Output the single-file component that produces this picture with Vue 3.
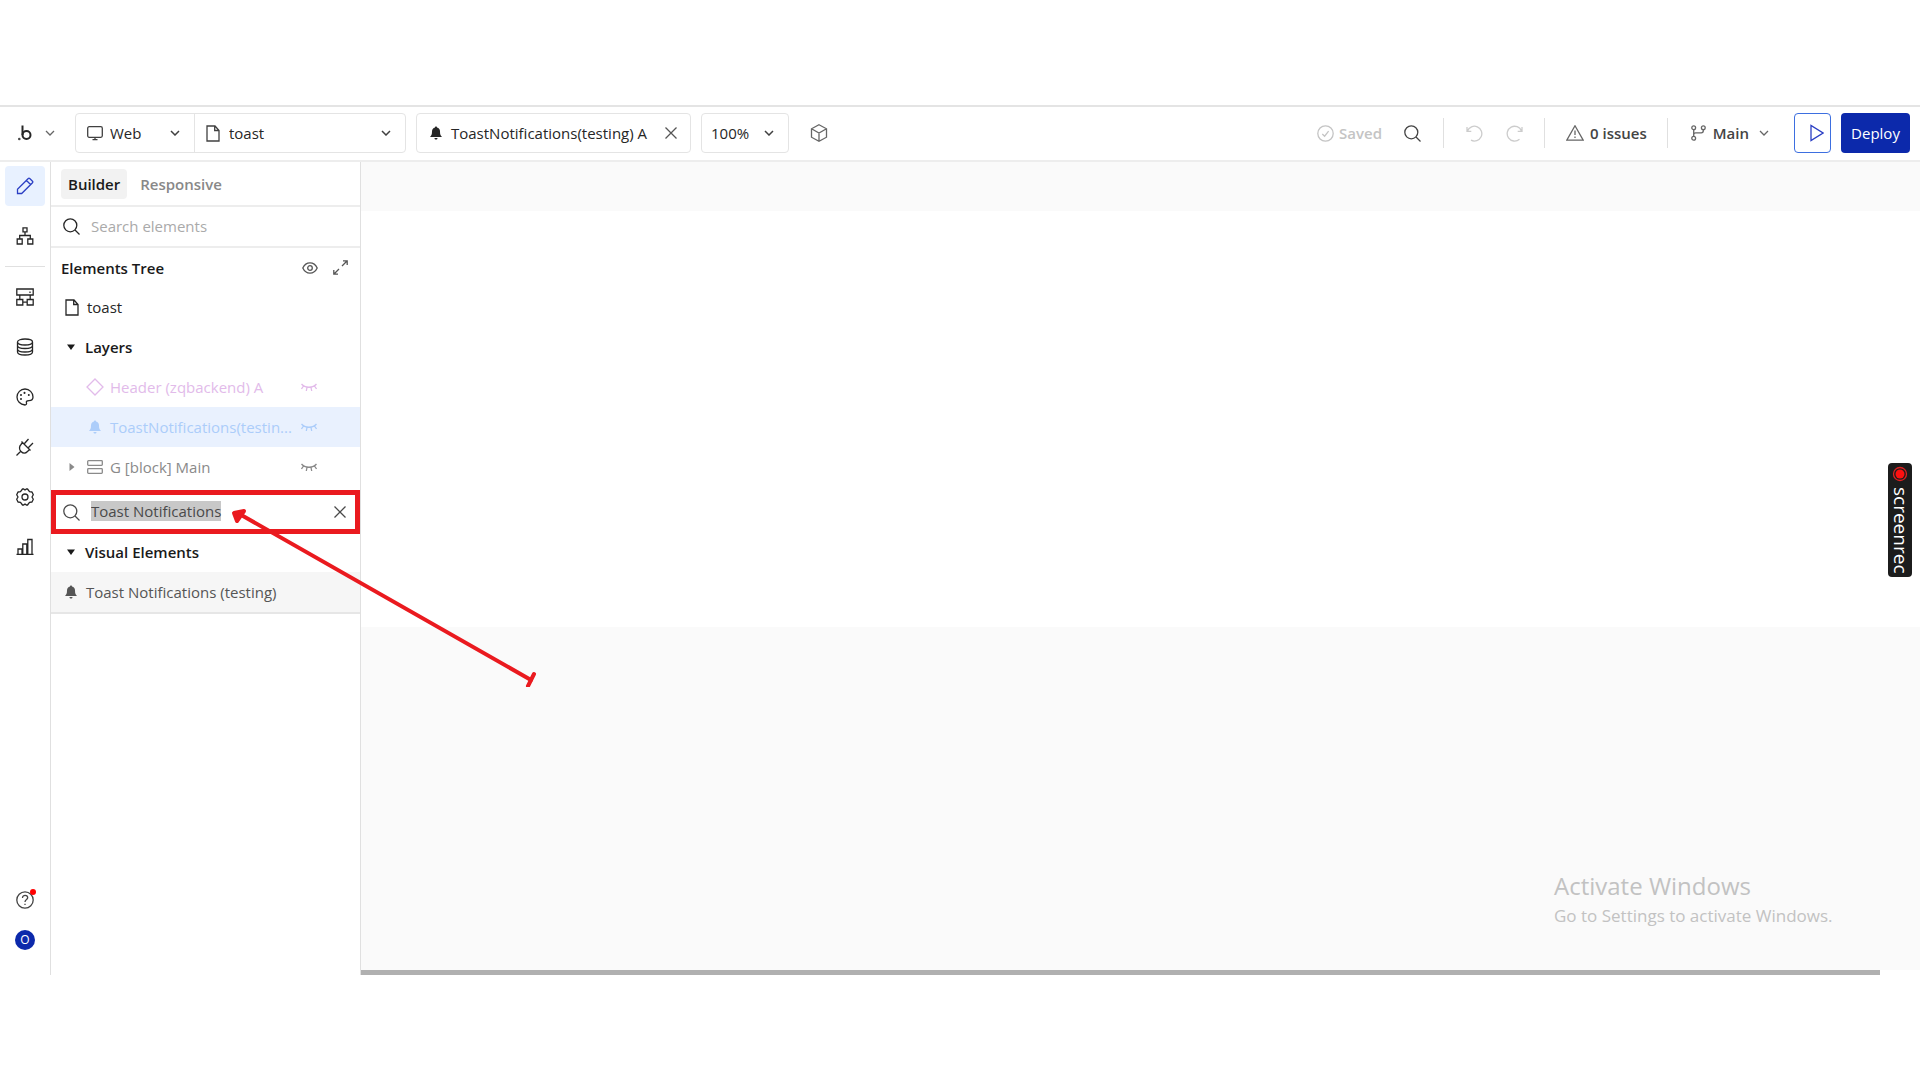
<script setup>
import { ref, onMounted } from 'vue'

const platform = ref('Web')
const page = ref('toast')
const zoom = ref('100%')
const elementQuery = ref('')
const paletteQuery = ref('Toast Notifications')
const paletteInput = ref(null)

const tools = [
  { id: 'design', label: 'Design', active: true },
  { id: 'workflow', label: 'Workflow', dividerAfter: true },
  { id: 'backend', label: 'Backend' },
  { id: 'data', label: 'Data' },
  { id: 'styles', label: 'Styles' },
  { id: 'plugins', label: 'Plugins' },
  { id: 'settings', label: 'Settings' },
  { id: 'logs', label: 'Logs' },
]

const layers = [
  { name: 'Header (zqbackend) A', kind: 'reusable' },
  { name: 'ToastNotifications(testin...', kind: 'plugin' },
  { name: 'G [block] Main', kind: 'container' },
]

onMounted(() => {
  paletteInput.value.focus({ preventScroll: true })
  paletteInput.value.select()
})
</script>

<template>
  <div class="app">
    <header class="toolbar">
      <button class="logo" aria-label="Main menu">
        <svg width="14" height="16" viewBox="0 0 14 16" fill="none" stroke="#4a4a4a">
          <g stroke-width="2"><path d="M4.500 0.500V10" /><circle cx="8.500" cy="10" r="4" /></g>
          <circle cx="1.300" cy="14" r="1.300" fill="#4a4a4a" stroke="none" />
        </svg>
        <svg class="chev soft" viewBox="0 0 10 6"><path d="M1 1l4 4 4-4" /></svg>
      </button>

      <div class="group">
        <label class="field platform">
          <svg class="lead" width="16" height="16" viewBox="0 0 16 16"><rect x="0.700" y="1.700" width="14.600" height="10.600" rx="1.500" /><path d="M5.500 14.700h5M8 12.500v2" /></svg>
          <select v-model="platform" aria-label="Platform"><option>Web</option></select>
          <svg class="chev" viewBox="0 0 10 6"><path d="M1 1l4 4 4-4" /></svg>
        </label>
        <label class="field page">
          <svg class="lead" width="14" height="17" viewBox="0 0 14 17"><path d="M1 1h8l4 4.500V16H1zM8.700 1.200V5.500H13" /></svg>
          <select v-model="page" aria-label="Page"><option>toast</option></select>
          <svg class="chev" viewBox="0 0 10 6"><path d="M1 1l4 4 4-4" /></svg>
        </label>
      </div>

      <div class="box tab">
        <svg class="bell" width="12" height="14" viewBox="0 0 12 14"><path d="M6 0.500c.7 0 1 .4 1 1C9 2 10 3.500 10 5.500c0 3 .6 4 1.700 5V11H.3v-.5C1.400 9.500 2 8.500 2 5.500 2 3.500 3 2 5 1.500c0-.6.3-1 1-1zM4.500 12h3c0 1-.6 1.600-1.500 1.600S4.500 13 4.500 12z" /></svg>
        <span>ToastNotifications(testing) A</span>
        <button aria-label="Close tab"><svg width="12" height="12" viewBox="0 0 12 12"><path d="M.5.500l11 11M11.500.500l-11 11" /></svg></button>
      </div>

      <label class="field box zoom">
        <select v-model="zoom" aria-label="Zoom"><option>100%</option></select>
        <svg class="chev" viewBox="0 0 10 6"><path d="M1 1l4 4 4-4" /></svg>
      </label>

      <button class="cube" aria-label="Components">
        <svg width="18" height="18" viewBox="0 0 18 18"><path d="M9 .8l7.500 4v8.400L9 17.200l-7.500-4V4.800zM1.500 4.800L9 9l7.500-4.200M9 9v8.200" /></svg>
      </button>

      <div class="status">
        <span class="saved">
          <svg width="17" height="17" viewBox="0 0 17 17"><circle cx="8.500" cy="8.500" r="7.700" /><path d="M5.300 9l2.300 2.200 4-5" /></svg>
          Saved
        </span>
        <button class="find" aria-label="Search"><svg width="17" height="17" viewBox="0 0 17 17"><circle cx="7.300" cy="7.300" r="6.500" /><path d="M12 12l4.500 4.500" /></svg></button>
        <i class="sep"></i>
        <button class="faded undo" aria-label="Undo"><svg width="17" height="17" viewBox="0 0 17 17"><path d="M1 2v4.300h4.300M1.500 6A7.400 7.400 0 1 1 5 15.200" /></svg></button>
        <button class="faded redo" aria-label="Redo"><svg width="17" height="17" viewBox="0 0 17 17"><path d="M16 2v4.300h-4.300M15.500 6A7.400 7.400 0 1 0 13.500 14.200" /></svg></button>
        <i class="sep"></i>
        <button class="issues">
          <svg width="18" height="16" viewBox="0 0 18 16"><path d="M9 .8l8.200 14.400H.8zM9 5.500v4.500M9 11.500v1.500" /></svg>
          0 issues
        </button>
        <i class="sep"></i>
        <button class="branch">
          <svg width="15" height="16" viewBox="0 0 15 16"><circle cx="2.700" cy="2.700" r="1.900" /><circle cx="12.300" cy="2.700" r="1.900" /><circle cx="2.700" cy="13.300" r="1.900" /><path d="M2.700 4.600v6.800M12.300 4.600v1.200q0 2-2 2H4.700q-2 0-2 2" /></svg>
          Main
          <svg class="chev soft" viewBox="0 0 10 6"><path d="M1 1l4 4 4-4" /></svg>
        </button>
        <button class="play" aria-label="Preview"><svg width="14" height="18" viewBox="0 0 14 18"><path d="M1 1.500v15L13 9z" /></svg></button>
        <button class="deploy">Deploy</button>
      </div>
    </header>

    <div class="workspace">
      <nav class="rail">
        <template v-for="t in tools" :key="t.id">
          <button class="tool" :class="{ active: t.active }" :aria-label="t.label">
            <svg width="18" height="18" viewBox="0 0 18 18">
              <path v-if="t.id === 'design'" d="M1.500 16.500v-4.200L12.300 1.500q.7-.7 1.400 0l2.800 2.800q.7.7 0 1.400L5.700 16.500zM10.500 3.500l4 4" />
              <path v-else-if="t.id === 'workflow'" d="M7 .8h4v4H7zM9 4.800V8.500M3.700 12V8.500h10.600V12M1.200 12h5v5h-5zM11.800 12h5v5h-5z" />
              <path v-else-if="t.id === 'backend'" d="M.8 1h16.400v6H.8zM14 3.500v1.500M.8 11.500h6v5.500h-6zM11.200 11.500h6v5.500h-6zM3.800 7v4.500M14.200 7v4.500M6.800 14.200h4.400" />
              <path v-else-if="t.id === 'data'" d="M1.500 4C1.500 0 16.500 0 16.500 4S1.500 8 1.500 4v10c0 4 15 4 15 0V4M1.500 7.500c0 4 15 4 15 0M1.500 11c0 4 15 4 15 0" />
              <g v-else-if="t.id === 'styles'"><path d="M9 17C4 16.500 1 13 1 9a8 8 0 0 1 16 0c0 3-1.500 3.600-4 3.600-2.500 0-3 .8-2.500 2.400.3 1.200-.4 2-1.500 2z" /><path class="dots" d="M5 11v.1M5 7v.1M8.500 4.800v.1M12.800 7v.1" /></g>
              <path v-else-if="t.id === 'plugins'" d="M.5 17.500l4.500-4.500M6.500 4.500l7 7-2 2c-2 2-4.500 2-6.500 0s-2-5 0-7zM5.500 3.500l9 9M8.500 5.500L12.500 1M12.500 9.500L17 5" />
              <g v-else-if="t.id === 'settings'"><path d="M6.500 1h1.200L9 2l1.300-1h1.200l2 2.700 2.500.3 1.300 2.700L16 9l1.300 2.300L16 14l-2.500.3-2 2.700h-1.200L9 16l-1.300 1H6.500l-2-2.700L2 14 .7 11.300 2 9 .7 6.700 2 4l2.500-.3z" stroke-linejoin="round" /><circle cx="9" cy="9" r="3" /></g>
              <path v-else d="M2 16.300h4V11H2zM6.800 16.300h4V6h-4zM11.800 16.300h4.200V1.500h-4.200zM.5 16.300h17" />
            </svg>
          </button>
          <hr v-if="t.dividerAfter" />
        </template>
        <div class="account">
          <button class="help" aria-label="Help">
            <svg width="18" height="18" viewBox="0 0 18 18"><circle cx="9" cy="9" r="8.200" /><path d="M6.500 7c0-3.500 5.200-3.200 5.200-.2C11.700 8.700 9 8.500 9 11M9 12.700V14" /></svg>
            <i class="badge"></i>
          </button>
          <button class="avatar" aria-label="Account">O</button>
        </div>
      </nav>

      <aside class="panel">
        <div class="tabs">
          <button class="on">Builder</button>
          <button>Responsive</button>
        </div>
        <label class="search first">
          <svg width="17" height="17" viewBox="0 0 17 17"><circle cx="7.300" cy="7.300" r="6.500" /><path d="M12 12l4.500 4.500" /></svg>
          <input v-model="elementQuery" placeholder="Search elements" aria-label="Search elements" />
        </label>

        <div class="row heading">
          <strong>Elements Tree</strong>
          <button aria-label="Toggle visibility"><svg width="16" height="12" viewBox="0 0 16 12"><path d="M.8 6C4-.8 12-.8 15.200 6 12 12.800 4 12.800.8 6z" /><circle cx="8" cy="6" r="2.300" /></svg></button>
          <button aria-label="Expand"><svg width="15" height="15" viewBox="0 0 15 15"><path d="M9 6l5-5M10 .8h4.200V5M6 9l-5 5M.8 10v4.200H5" /></svg></button>
        </div>
        <div class="row root">
          <svg width="14" height="17" viewBox="0 0 14 17"><path d="M1 1h8l4 4.500V16H1zM8.700 1.200V5.500H13" /></svg>
          toast
        </div>
        <div class="row section">
          <svg class="arrow" width="8" height="6" viewBox="0 0 8 6"><path d="M0 .5h8L4 6z" /></svg>
          <strong>Layers</strong>
        </div>
        <div v-for="l in layers" :key="l.name" class="row layer" :class="l.kind">
          <span class="caret"><svg v-if="l.kind === 'container'" class="arrow" width="6" height="8" viewBox="0 0 6 8"><path d="M.5 0v8L5.500 4z" /></svg></span>
          <span class="glyph">
            <svg v-if="l.kind === 'reusable'" width="18" height="18" viewBox="0 0 18 18"><path d="M9 1l8 8-8 8-8-8z" /></svg>
            <svg v-else-if="l.kind === 'plugin'" class="bell" width="12" height="14" viewBox="0 0 12 14"><path d="M6 0.500c.7 0 1 .4 1 1C9 2 10 3.500 10 5.500c0 3 .6 4 1.700 5V11H.3v-.5C1.400 9.500 2 8.500 2 5.500 2 3.500 3 2 5 1.500c0-.6.3-1 1-1zM4.500 12h3c0 1-.6 1.600-1.500 1.600S4.500 13 4.500 12z" /></svg>
            <svg v-else width="16" height="14" viewBox="0 0 16 14"><rect x=".7" y=".7" width="14.600" height="4.600" rx=".8" /><rect x=".7" y="8.700" width="14.600" height="4.600" rx=".8" /></svg>
          </span>
          <span class="name">{{ l.name }}</span>
          <button aria-label="Show element"><svg width="16" height="9" viewBox="0 0 16 9"><path d="M.5 1C4 5.300 12 5.300 15.500 1M2.500 3L.5 6M6 4.300L5.300 8M10 4.300L10.700 8M13.500 3l2 3" /></svg></button>
        </div>

        <label class="search second">
          <svg width="17" height="17" viewBox="0 0 17 17"><circle cx="7.300" cy="7.300" r="6.500" /><path d="M12 12l4.500 4.500" /></svg>
          <input ref="paletteInput" v-model="paletteQuery" aria-label="Search visual elements" />
          <button aria-label="Clear search"><svg width="12" height="12" viewBox="0 0 12 12"><path d="M.5.500l11 11M11.500.500l-11 11" /></svg></button>
          <i class="highlight"></i>
          <svg class="pointer" width="310" height="182" viewBox="0 0 310 182">
            <g stroke-width="4">
              <path d="M15 11L303 175" />
              <path d="M306 169l-6 12" />
              <path d="M6 8l10-2-7 10z" fill="#ea1a1f" />
            </g>
          </svg>
        </label>
        <div class="row section">
          <svg class="arrow" width="8" height="6" viewBox="0 0 8 6"><path d="M0 .5h8L4 6z" /></svg>
          <strong>Visual Elements</strong>
        </div>
        <button class="row result">
          <svg class="bell" width="12" height="14" viewBox="0 0 12 14"><path d="M6 0.500c.7 0 1 .4 1 1C9 2 10 3.500 10 5.500c0 3 .6 4 1.700 5V11H.3v-.5C1.400 9.500 2 8.500 2 5.500 2 3.500 3 2 5 1.500c0-.6.3-1 1-1zM4.500 12h3c0 1-.6 1.600-1.500 1.600S4.500 13 4.500 12z" /></svg>
          Toast Notifications (testing)
        </button>
      </aside>

      <main class="canvas">
        <div class="surface">
          <div class="sheet"></div>
        </div>
        <div class="track"><div class="thumb"></div></div>
        <div class="watermark">
          <p class="title">Activate Windows</p>
          <p>Go to Settings to activate Windows.</p>
        </div>
        <button class="recorder">
          <svg width="16" height="16" viewBox="0 0 16 16"><circle cx="8" cy="8" r="6.500" stroke="#e02020" fill="none" /><circle cx="8" cy="8" r="4.500" fill="#ff1010" stroke="none" /></svg>
          <span>screen</span><span>rec</span>
        </button>
      </main>
    </div>
  </div>
</template>

<style>
body {
  margin: 0;
  background: #fff;
}
</style>

<style scoped>
* {
  box-sizing: border-box;
}
.app {
  display: flex;
  flex-direction: column;
  min-height: 100vh;
  padding: 105px 0;
  font: 15px/20px "Open Sans", sans-serif;
  color: #262626;
}
button,
input,
select {
  font: inherit;
  color: inherit;
  background: none;
  border: 0;
  padding: 0;
  margin: 0;
  outline: 0;
}
button {
  display: flex;
  align-items: center;
  cursor: pointer;
  white-space: nowrap;
}
svg {
  display: block;
  flex: none;
  fill: none;
  stroke: currentColor;
  stroke-width: 1.300;
}
strong {
  font-weight: 600;
  color: #1a1a1a;
}
.bell,
.arrow {
  fill: currentColor;
  stroke: none;
}
.chev {
  width: 10px;
  height: 6px;
  color: #404040;
  stroke-width: 1.500;
}
.chev.soft {
  color: #666;
  stroke-width: 1.300;
}

/* Toolbar */
.toolbar {
  display: flex;
  align-items: center;
  height: 57px;
  padding: 0 10px 1px 0;
  border-top: 2px solid #e4e4e4;
  border-bottom: 2px solid #ededed;
}
.logo {
  gap: 13px;
  width: 75px;
  height: 40px;
  padding-left: 18px;
}
.group,
.box {
  display: flex;
  height: 40px;
  margin-right: 10px;
  border: 1px solid #e4e4e4;
  border-radius: 4px;
}
.field {
  display: grid;
  align-items: center;
}
.field > * {
  grid-area: 1 / 1;
}
.field svg {
  pointer-events: none;
}
.field .chev {
  justify-self: end;
  margin-right: 14px;
}
.lead {
  margin-left: 11px;
  color: #404040;
}
select {
  appearance: none;
  width: 100%;
  height: 38px;
  padding-left: 34px;
}
.platform {
  width: 119px;
  border-right: 1px solid #e4e4e4;
}
.page {
  width: 210px;
}
.tab {
  align-items: center;
  width: 275px;
  padding: 0 13px;
}
.tab span {
  flex: 1;
  padding-left: 9px;
  white-space: nowrap;
}
.tab button {
  color: #555;
}
.zoom {
  display: grid;
  width: 88px;
}
.zoom select {
  padding-left: 9px;
}
.cube {
  margin-left: 11px;
  color: #666;
}
.status {
  display: flex;
  align-items: center;
  margin-left: auto;
  font-weight: 600;
  color: #444;
}
.saved {
  display: flex;
  align-items: center;
  gap: 5px;
  color: #c4c4c4;
}
.find {
  margin: 0 22px;
}
.sep {
  width: 1px;
  height: 30px;
  background: #e0e0e0;
}
.faded {
  color: #ccc;
}
.undo {
  margin: 0 23px 0 22px;
}
.redo {
  margin-right: 21px;
}
.issues {
  gap: 6px;
  margin: 0 20px 0 21px;
}
.issues svg,
.branch svg {
  color: #666;
}
.branch {
  gap: 7px;
  margin: 0 25px 0 23px;
}
.branch .chev {
  margin-left: 3px;
}
.play {
  justify-content: center;
  width: 37px;
  height: 40px;
  padding-left: 8px;
  margin-right: 10px;
  border: 1px solid #3d6fe0;
  border-radius: 4px;
  color: #2b3fc4;
}
.deploy {
  justify-content: center;
  width: 69px;
  height: 40px;
  border-radius: 4px;
  background: #0c29ab;
  color: #fff;
  font-weight: 400;
}

/* Workspace */
.workspace {
  display: flex;
  flex: 1;
}
.rail {
  display: flex;
  flex-direction: column;
  align-items: center;
  gap: 10px;
  width: 51px;
  padding-top: 4px;
  border-right: 1px solid #e0e0e0;
}
.tool {
  justify-content: center;
  width: 40px;
  height: 40px;
  border-radius: 4px;
}
.tool.active {
  background: #e8f1ff;
  color: #2b3fc4;
}
.dots {
  stroke-width: 2;
  stroke-linecap: round;
}
.rail hr {
  width: 40px;
  height: 1px;
  margin: 0;
  border: 0;
  background: #e0e0e0;
}
.account {
  display: flex;
  flex-direction: column;
  align-items: center;
  gap: 21px;
  margin-top: auto;
  padding-bottom: 25px;
}
.help {
  position: relative;
  color: #444;
}
.badge {
  position: absolute;
  top: -2px;
  right: -2px;
  width: 6px;
  height: 6px;
  border-radius: 50%;
  background: #f00;
}
.avatar {
  justify-content: center;
  width: 20px;
  height: 20px;
  border-radius: 50%;
  background: #0c29ab;
  color: #fff;
  font-size: 12px;
}

/* Element panel */
.panel {
  width: 310px;
  border-right: 1px solid #e0e0e0;
}
.tabs {
  display: flex;
  align-items: center;
  gap: 6px;
  height: 45px;
  padding-left: 10px;
  border-bottom: 2px solid #ededed;
}
.tabs button {
  height: 30px;
  padding: 0 7px;
  border-radius: 4px;
  font-weight: 600;
  color: #888;
}
.tabs .on {
  background: #f2f2f2;
  color: #1a1a1a;
}
.search {
  position: relative;
  display: flex;
  align-items: center;
  gap: 11px;
  padding: 0 14px 0 12px;
}
.search input {
  flex: 1;
  min-width: 0;
  height: 22px;
  padding-bottom: 2px;
}
.search input::placeholder {
  color: #aaa;
  opacity: 1;
}
.first {
  height: 41px;
  border-bottom: 2px solid #ededed;
}
.second {
  height: 45px;
  padding-top: 5px;
  color: #4a4a4a;
}
.second input::selection {
  background: #c8c8c8;
  color: #4a4a4a;
}
.highlight {
  position: absolute;
  inset: 3px 0 -2px 0;
  border: 5px solid #ea1a1f;
  pointer-events: none;
}
.pointer {
  position: absolute;
  top: 18px;
  left: 177px;
  z-index: 2;
  color: #ea1a1f;
  stroke-linecap: round;
  stroke-linejoin: round;
  pointer-events: none;
}
.row {
  display: flex;
  align-items: center;
  width: 100%;
  height: 40px;
}
.heading {
  gap: 15px;
  height: 39px;
  padding: 0 12px 0 10px;
  color: #555;
}
.heading strong {
  flex: 1;
}
.root {
  gap: 8px;
  padding-left: 14px;
}
.section {
  gap: 10px;
  padding-left: 16px;
  color: #1a1a1a;
}
.layer {
  padding-right: 43px;
  color: #8a8a8a;
}
.caret {
  width: 27px;
  padding-left: 18px;
}
.glyph {
  display: flex;
  justify-content: center;
  width: 33px;
}
.name {
  flex: 1;
  margin-left: -1px;
  white-space: nowrap;
}
.layer.reusable {
  color: #e2bbea;
}
.layer.plugin {
  background: #e9f1fe;
  color: #accdfa;
}
.result {
  gap: 9px;
  height: 42px;
  padding-left: 14px;
  background: #f6f6f6;
  border-bottom: 2px solid #e6e6e6;
  color: #555;
}

/* Canvas */
.canvas {
  position: relative;
  display: flex;
  flex: 1;
  flex-direction: column;
}
.surface {
  flex: 1;
  padding-top: 49px;
  background: #fafafa;
}
.sheet {
  height: 416px;
  background: #fff;
}
.track {
  padding-right: 40px;
}
.thumb {
  height: 5px;
  background: #b0b0b0;
}
.watermark {
  position: absolute;
  right: 82px;
  bottom: 47px;
  width: 284px;
  font-size: 17px;
  line-height: 24px;
  color: #c2c2c2;
  white-space: nowrap;
}
.watermark p {
  margin: 0;
}
.watermark .title {
  font-size: 24px;
  line-height: 36px;
}
.recorder {
  position: absolute;
  top: 301px;
  right: 8px;
  width: 24px;
  height: 114px;
  padding-top: 3px;
  border-radius: 4px;
  background: #1c1c1c;
  color: #fff;
  font-size: 19px;
  line-height: 24px;
  writing-mode: vertical-rl;
}
.recorder svg {
  margin-bottom: 5px;
}
.recorder span {
  padding-left: 2px;
}
</style>
